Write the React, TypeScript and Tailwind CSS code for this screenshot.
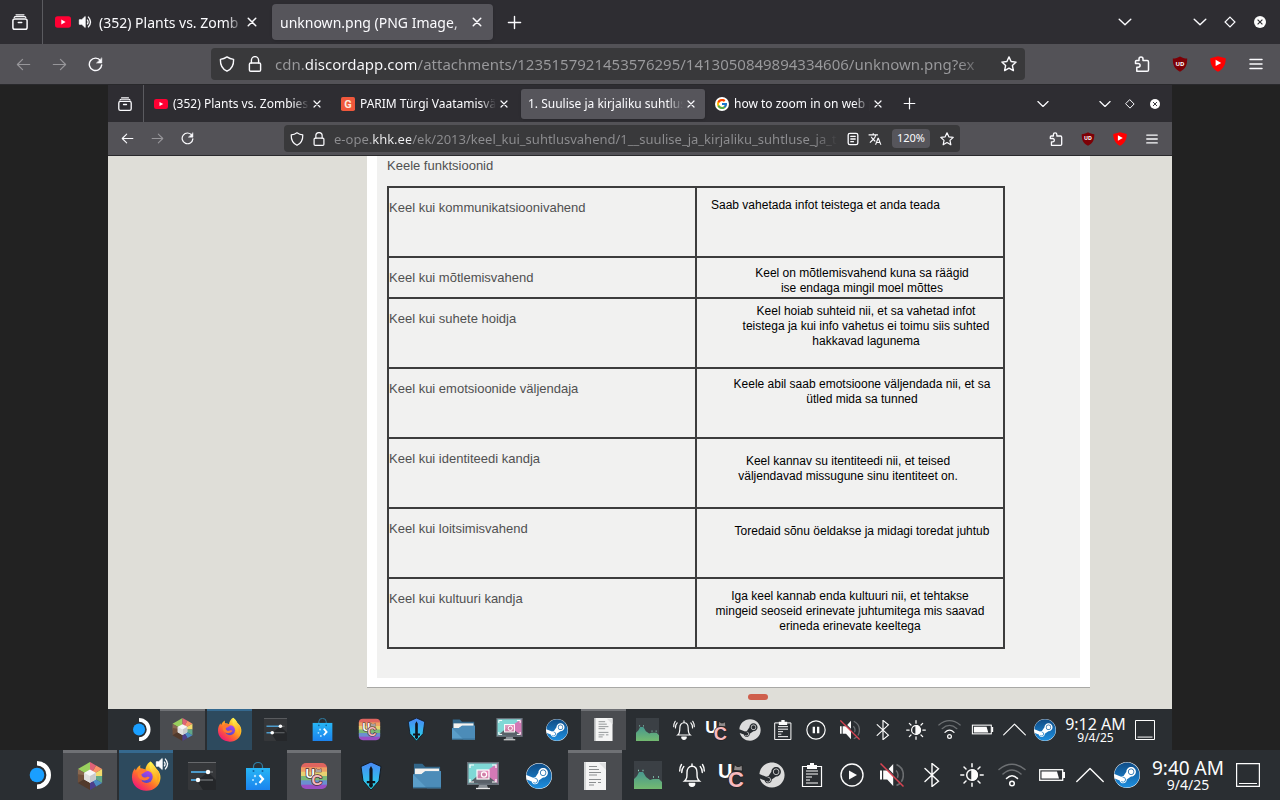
import React from "react";
import { FaSteam } from "react-icons/fa6";
import { FcGoogle } from "react-icons/fc";
import { MdTranslate } from "react-icons/md";

type IconProps = { className: string };

function Line({ className, box = 16, width = 1.3, children }: { className: string; box?: number; width?: number; children: React.ReactNode }) {
  return (
    <svg viewBox={`0 0 ${box} ${box}`} className={className} fill="none" stroke="currentColor" strokeWidth={width} strokeLinecap="round" strokeLinejoin="round" aria-hidden="true">
      {children}
    </svg>
  );
}

/* ---------- Browser icons ---------- */

const TabsIcon = ({ className }: IconProps) => (
  <Line className={className} width={1.5}>
    <path d="M4 .8h8M2.2 3.6q.3-1 1.4-1h8.8q1.1 0 1.4 1" strokeWidth={1.2} />
    <rect x=".9" y="5" width="14.2" height="10.2" rx="1.8" />
    <path d="M6.3 8.6h3.4" />
  </Line>
);
const CloseIcon = ({ className }: IconProps) => (
  <Line className={className} width={2.4}>
    <path d="M2 2l12 12M14 2L2 14" />
  </Line>
);
const PlusIcon = ({ className }: IconProps) => (
  <Line className={className} width={1.5}>
    <path d="M8 1.5v13M1.5 8h13" />
  </Line>
);
const ChevronDown = ({ className }: IconProps) => (
  <Line className={className} width={1.4}>
    <path d="M2.2 5.2L8 10.8l5.8-5.6" />
  </Line>
);
const DiamondIcon = ({ className }: IconProps) => (
  <Line className={className} width={1.6}>
    <path d="M8 1.4L14.6 8 8 14.6 1.4 8z" strokeLinejoin="miter" />
  </Line>
);
const WindowClose = ({ className }: IconProps) => (
  <svg viewBox="0 0 16 16" className={className} aria-hidden="true">
    <circle cx="8" cy="8" r="8" fill="#fcfcfc" />
    <path d="M4.8 4.8l6.4 6.4M11.2 4.8l-6.4 6.4" stroke="#2e2d32" strokeWidth="1.5" />
  </svg>
);
const BackIcon = ({ className }: IconProps) => (
  <Line className={className}>
    <path d="M14.6 8H1.6M7 2.6L1.5 8 7 13.4" />
  </Line>
);
const ForwardIcon = ({ className }: IconProps) => (
  <Line className={className}>
    <path d="M1.4 8h13M9 2.6L14.5 8 9 13.4" />
  </Line>
);
const ReloadIcon = ({ className }: IconProps) => (
  <Line className={className} width={1.5}>
    <path d="M13.4 4A6.6 6.6 0 1 0 14.6 8.4" />
    <path d="M14.7 1.2v5.2H9.4z" fill="currentColor" strokeWidth=".6" />
  </Line>
);
const ShieldIcon = ({ className }: IconProps) => (
  <Line className={className} width={1.4}>
    <path d="M8 .9c2 1.5 4.3 2.3 6.6 2.5C14.8 9 12.6 13 8 15.2 3.4 13 1.2 9 1.4 3.4 3.7 3.2 6 2.4 8 .9z" />
  </Line>
);
const LockIcon = ({ className }: IconProps) => (
  <Line className={className} width={1.4}>
    <rect x="2.4" y="7" width="11.2" height="8.2" rx="1.3" />
    <path d="M4.4 7V4.2a3.6 3.6 0 0 1 7.2 0V7" />
  </Line>
);
const StarIcon = ({ className }: IconProps) => (
  <Line className={className} width={1.4}>
    <path d="M8 .9l2.1 4.6 5 .6-3.7 3.5 1 5L8 12.1l-4.4 2.5 1-5L.9 6.1l5-.6z" />
  </Line>
);
const ReaderIcon = ({ className }: IconProps) => (
  <Line className={className} width={1.5}>
    <rect x="2.5" y="1.5" width="11" height="13" rx="2" />
    <path d="M5.5 5h5M5.5 8h5M5.5 11h3" />
  </Line>
);
const PuzzleIcon = ({ className }: IconProps) => (
  <Line className={className} width={1.5}>
    <path d="M2.8 15.2v-4h1.4a1.9 1.9 0 0 0 0-3.8H1.500V5.600q0-1 1-1H5V3a2 2 0 0 1 4 0v1.600h4.200q1.300 0 1.300 1.300v8q0 1.300-1.300 1.300z" />
  </Line>
);
const UblockIcon = ({ className }: IconProps) => (
  <svg viewBox="0 0 16 16" className={className} aria-hidden="true">
    <path d="M8 .4c2 1.300 4.500 2 7.200 2.100 0 6.500-1.500 10.300-7.200 13.200C2.300 12.800.8 9 .8 2.500 3.500 2.400 6 1.700 8 .4z" fill="#7d0006" />
    <text x="8" y="9.5" fontSize="6" fontWeight="700" textAnchor="middle" fill="#fff" fontFamily="Noto Sans, sans-serif">UD</text>
  </svg>
);
const SponsorIcon = ({ className }: IconProps) => (
  <svg viewBox="0 0 16 16" className={className} aria-hidden="true">
    <path d="M8 .3l7.700 2c.2 6-2.500 11-7.700 13.500C2.800 13.300.1 8.300.3 2.300z" fill="#ff0000" />
    <path d="M5.600 3.700l5.600 3.200-5.600 3.200z" fill="#fff" />
  </svg>
);
const MenuIcon = ({ className }: IconProps) => (
  <Line className={className} width={1.5}>
    <path d="M2 3.5h12M2 8h12M2 12.5h12" />
  </Line>
);
const YoutubeIcon = ({ className }: IconProps) => (
  <svg viewBox="0 0 16 16" className={className} aria-hidden="true">
    <rect x="0" y="2.3" width="16" height="11.4" rx="2.6" fill="#ff0033" />
    <path d="M6.300 5.600l4.300 2.400-4.300 2.400z" fill="#fff" />
  </svg>
);
const SoundIcon = ({ className }: IconProps) => (
  <svg viewBox="0 0 16 16" className={className} fill="none" stroke="#fbfbfe" aria-hidden="true">
    <path d="M1.500 5.400h2.800L8.200 1.800v12.400l-3.900-3.600H1.500z" fill="#fbfbfe" strokeLinejoin="round" />
    <path d="M10.500 5.200q2 2.800 0 5.600M11.500 1.800q5.600 6.200 0 12.400" strokeWidth="1.5" />
  </svg>
);
const GuideIcon = ({ className }: IconProps) => (
  <svg viewBox="0 0 16 16" className={className} aria-hidden="true">
    <rect width="16" height="16" rx="2" fill="#f0583c" />
    <text x="8" y="12.5" fontSize="12.5" fontWeight="700" textAnchor="middle" fill="#ffe9dd" fontFamily="Roboto, sans-serif">G</text>
  </svg>
);

/* ---------- Application icons ---------- */

const DeckIcon = ({ className }: IconProps) => (
  <svg viewBox="0 0 28 28" className={className} aria-hidden="true">
    <circle cx="11" cy="14" r="7.3" fill="#1a9fff" />
    <path d="M11 0a14 14 0 0 1 0 28v-4.600a9.400 9.400 0 0 0 0-18.800z" fill="#fff" />
  </svg>
);
const PrismIcon = ({ className }: IconProps) => (
  <svg viewBox="0 0 28 30" className={className} aria-hidden="true">
    <path d="M14 0L1 7.500 14 15z" fill="#99cf5e" />
    <path d="M1 7.500V15l13 0z" fill="#8a6a52" />
    <path d="M1 13v9.500L14 15z" fill="#6f4f3b" />
    <path d="M1 22.500L14 30V15z" fill="#523a2c" />
    <path d="M14 0l6.500 3.700L14 15z" fill="#df6277" />
    <path d="M20.500 3.700L27 7.500 14 15z" fill="#fb9168" />
    <path d="M27 7.500V15H14z" fill="#f3db6c" />
    <path d="M27 15v7.500L14 15z" fill="#62a888" />
    <path d="M27 22.500l-6.500 3.700L14 15z" fill="#4b8cc4" />
    <path d="M20.500 26.200L14 30V15z" fill="#4c3e8e" />
    <path d="M14 8l6.200 3.500v7.200L14 22.300l-6.200-3.600v-7.200z" fill="#f6f6f6" />
    <path d="M14 15l6.200-3.500v7.200L14 22.300z" fill="#c9c9cb" />
    <path d="M14 15v7.300l-6.200-3.600v-7.200z" fill="#dfdfdf" />
  </svg>
);
const FirefoxIcon = ({ className }: IconProps) => (
  <svg viewBox="1 0 30 32" className={`overflow-visible ${className}`} aria-hidden="true">
    <defs>
      <linearGradient id="fxBody" x1=".85" y1=".1" x2=".2" y2=".95">
        <stop offset="0" stopColor="#fff44f" />
        <stop offset=".35" stopColor="#ffb320" />
        <stop offset=".62" stopColor="#ff6a2e" />
        <stop offset="1" stopColor="#f0147a" />
      </linearGradient>
      <linearGradient id="fxGlobe" x1=".7" y1="0" x2=".3" y2="1">
        <stop offset="0" stopColor="#b044f0" />
        <stop offset="1" stopColor="#4a49c6" />
      </linearGradient>
      <linearGradient id="fxFlame" x1=".3" y1="0" x2=".6" y2="1">
        <stop offset="0" stopColor="#fff44f" />
        <stop offset="1" stopColor="#ff9a1f" />
      </linearGradient>
    </defs>
    <g transform="translate(-1 -1) scale(1.07)">
      <path d="M20.500.5c4 2.500 4.600 6.200 7.600 9 2.900 3 3.400 6 3.200 9C30.800 26 24.500 31.700 16.300 31.700 7.600 31.700.9 25.600.9 17.300c0-4.300 1.300-7.300 3.300-9.700.1 1 .3 1.700.8 2.400C6 7.200 7.800 5.300 10 4.300c-.5 1.400-.4 2.600.2 3.600 2 .1 3.600.5 5 1.300C15.600 5.600 17.200 2.600 20.500.5z" fill="url(#fxBody)" />
      <circle cx="16.5" cy="16.8" r="6.6" fill="url(#fxGlobe)" />
      <path d="M10 8c3 0 5.800 1 7.300 3.200-3.300 0-3.400 2.300-6.300 2.600 0 2.700 2.300 4.500 5.200 3.400 1.700-.6 2.700-.6 3.600.3-1.800 3.400-8 4.600-11.400.6C6 15.200 7 10.500 10 8z" fill="#ff7a2f" />
      <path d="M20.500.5c4 2.500 4.600 6.200 7.600 9 3 3.500 2.800 8.500 0 12.500-.1-7-3.400-7.600-6.600-11.300-1.700-2-2.200-5.300-1-10.200z" fill="url(#fxFlame)" />
    </g>
  </svg>
);
const SettingsIcon = ({ className }: IconProps) => (
  <svg viewBox="0 0 28 28" className={className} aria-hidden="true">
    <rect width="28" height="28" rx="1" fill="#35373a" />
    <path d="M20 10l8 8v10H15L9 19z" fill="#25272a" />
    <path d="M0 .5h28" stroke="#66686b" />
    <path d="M3 10h17M3 18h7" stroke="#4d9bcb" strokeWidth="1.8" />
    <path d="M20 10h5M10 18h15" stroke="#66696c" strokeWidth="1.3" />
    <circle cx="20" cy="10" r="2.2" fill="#fff" />
    <circle cx="10" cy="18" r="2.2" fill="#fff" />
  </svg>
);
const StoreIcon = ({ className }: IconProps) => (
  <svg viewBox="0 0 28 28" className={className} aria-hidden="true">
    <defs>
      <linearGradient id="store" x1="0" y1="0" x2="0" y2="1">
        <stop offset="0" stopColor="#27b6f5" />
        <stop offset="1" stopColor="#1b83ee" />
      </linearGradient>
    </defs>
    <path d="M9.500 9V4.500a4.500 4 0 0 1 9 0V9" fill="none" stroke="#2f7ea4" strokeWidth="1.2" />
    <rect x="2" y="6" width="24" height="22" fill="url(#store)" />
    <circle cx="9.5" cy="9" r="1" fill="#1264a0" />
    <circle cx="18.5" cy="9" r="1" fill="#1264a0" />
    <path d="M15.500 13l3.500 4-3.500 4" fill="none" stroke="#fff" strokeWidth="2.2" />
    <circle cx="11" cy="14" r="1.2" fill="#aee0ff" />
    <circle cx="9" cy="18" r="1.1" fill="#aee0ff" />
    <circle cx="12" cy="22" r="1.2" fill="#aee0ff" />
  </svg>
);
const VencordIcon = ({ className }: IconProps) => (
  <svg viewBox="0 0 28 28" className={className} aria-hidden="true">
    <defs>
      <clipPath id="vcClip"><rect x="1" y="1" width="26" height="26" rx="5" /></clipPath>
    </defs>
    <g clipPath="url(#vcClip)">
      <rect width="28" height="6" fill="#e0655f" />
      <rect y="5.3" width="28" height="5" fill="#ef9f63" />
      <rect y="9.7" width="28" height="5" fill="#e8d171" />
      <rect y="14" width="28" height="5" fill="#7cb976" />
      <rect y="18.3" width="28" height="5" fill="#6b8fd0" />
      <rect y="22.7" width="28" height="6" fill="#9a4fc4" />
    </g>
    <g fontFamily="Liberation Sans, sans-serif" fontWeight="700" stroke="#4a3038" strokeWidth="1.5" paintOrder="stroke">
      <text x="5.5" y="15.5" fontSize="13" fill="#fff">U</text>
      <path d="M15.500 10l.6-3.500 1.600 1.200h1.800l1.600-1.200.4 3.500z" fill="#a9a3a3" strokeWidth=".6" />
      <text x="11.5" y="22.5" fontSize="15" fill="#f7b9bd">C</text>
    </g>
  </svg>
);
const SwordIcon = ({ className }: IconProps) => (
  <svg viewBox="0 0 28 28" className={className} aria-hidden="true">
    <defs>
      <linearGradient id="sword" x1="0" y1="0" x2="0" y2="1">
        <stop offset="0" stopColor="#4a86f5" />
        <stop offset="1" stopColor="#25dbe8" />
      </linearGradient>
    </defs>
    <path d="M14 0l10 4.500-2 14.500L14 28 6 19 4 4.500z" fill="url(#sword)" stroke="#121a24" strokeWidth="1" />
    <path d="M14 4l1.600 3v12h2.600v2.200h-2.600L16 24l-2 2-2-2 .4-2.800H9.800V19h2.600V7z" fill="#11151c" />
  </svg>
);
const FolderIcon = ({ className }: IconProps) => (
  <svg viewBox="0 0 30 26" className={className} aria-hidden="true">
    <path d="M1 0h9l3 3h16v8H1z" fill="#326689" />
    <path d="M2 5h26v8H2z" fill="#f4f2ef" />
    <path d="M0 11h9l4-3h17v18H0z" fill="#5b9ec9" />
    <path d="M30 8v18H15L0 11h9l4-3z" fill="#4c8cb8" />
    <path d="M0 25.300h30" stroke="#376f96" />
  </svg>
);
const SpectacleIcon = ({ className }: IconProps) => (
  <svg viewBox="2 0 28 28" className={`overflow-visible ${className}`} aria-hidden="true">
    <rect width="32" height="23" fill="#69717a" />
    <path d="M1.500 1.500h29L11 21.500H1.500z" fill="#7fd8d6" />
    <path d="M30.500 1.500v20L16 11z" fill="#d379b6" />
    <path d="M1.500 21.500l14-12 15 12z" fill="#596068" />
    <path d="M3 6V3h4M25 3h4v3M3 17v3h4M25 20h4v-3" stroke="#fff" strokeWidth="1.2" fill="none" />
    <rect x="10" y="8" width="12" height="9" fill="#ef8ab8" fillOpacity=".8" stroke="#fff" strokeWidth="1.2" />
    <circle cx="17" cy="12.5" r="2.6" fill="none" stroke="#fff" strokeWidth="1.2" />
    <path d="M12 23h8l1 3H11z" fill="#8b9197" />
    <path d="M9 26.500h14" stroke="#e8e8e8" strokeWidth="1.3" />
  </svg>
);
const SteamBlue = ({ className }: IconProps) => (
  <span className="flex rounded-full bg-white">
    <FaSteam className={className} fill="url(#steamBlue)" />
  </span>
);
const SteamGray = ({ className }: IconProps) => <FaSteam className={className} color="#dcdcdc" />;
const DocIcon = ({ className }: IconProps) => (
  <svg viewBox="0 0 28 28" className={className} aria-hidden="true">
    <rect x="3" y="0" width="22" height="28" fill="#f4f4f4" />
    <path d="M4 0v28" stroke="#c9cbcc" strokeWidth="1.5" />
    <path d="M18 1h7v7z" fill="#dedfe0" />
    <path d="M8 4.500h8M8 7.500h10M8 10.500h12M8 13h8M8 17.500h12M8 20.500h7M17 20.500h3M8 23h5" stroke="#8b8e90" strokeWidth="1.1" />
  </svg>
);
const MonitorIcon = ({ className }: IconProps) => (
  <svg viewBox="0 0 28 28" className={className} aria-hidden="true">
    <defs>
      <linearGradient id="hills" x1="0" y1="0" x2="0" y2="1">
        <stop offset="0" stopColor="#48988e" />
        <stop offset="1" stopColor="#73ba70" />
      </linearGradient>
    </defs>
    <rect width="28" height="28" fill="#3b4045" />
    <path d="M0 18l3-3 2-4h4l3 5 4 3 3-1h6l3 3v7H0z" fill="url(#hills)" />
    <path d="M4 9.500h1M8.500 9.500h1M19 16h1M24 16h1" stroke="#8bd4bd" strokeWidth="1.6" />
  </svg>
);

/* ---------- Tray icons ---------- */

const BellIcon = ({ className }: IconProps) => (
  <Line className={className} box={24} width={1.4}>
    <path d="M4.500 18c2.500-2 2.500-4 2.500-8.500C7 5.500 9 3.300 12 3.300s5 2.200 5 6.200c0 4.500 0 6.500 2.500 8.500z" strokeLinejoin="miter" />
    <path d="M12 1v2M3.800 3.500C2.300 5 1.700 7 1.700 9.500M1.500 1.500C.2 3.500-.5 5.500-.3 8M20.200 3.500c1.500 1.500 2.100 3.500 2.100 6M22.500 1.500c1.300 2 2 4 1.800 6.500" />
    <path d="M9.300 20.500h5.400a2.700 2.700 0 0 1-5.400 0z" fill="currentColor" />
  </Line>
);
const VcTrayIcon = ({ className }: IconProps) => (
  <svg viewBox="0 0 24 24" className={className} aria-hidden="true">
    <g fontFamily="Liberation Sans, sans-serif" fontWeight="700">
      <text x="-2" y="15" fontSize="20" fill="#fff">U</text>
      <path d="M13.500 7.500l1-6 2.500 2h2.500l2.500-1.500.5 6z" fill="#8e8a8a" stroke="#1b1b1b" strokeWidth=".8" />
      <text x="8" y="24" fontSize="22" fill="#f7b9bd" stroke="#1f2023" strokeWidth="1.5" paintOrder="stroke">C</text>
    </g>
  </svg>
);
const ClipIcon = ({ className }: IconProps) => (
  <Line className={className} box={24} width={1.2}>
    <path d="M2.500 3.500h19v20h-19z" strokeLinejoin="miter" />
    <path d="M7 2h3V0h4v2h3v4H7z" fill="currentColor" stroke="none" />
    <path d="M6 8h12M6 11h12M6 14h6M6 17h4M6 20h12" strokeLinecap="butt" />
  </Line>
);
const PlayIcon = ({ className }: IconProps) => (
  <Line className={className} box={24} width={1.4}>
    <circle cx="12" cy="12" r="11" />
    <path d="M9 7.500l8 4.500-8 4.500z" fill="currentColor" stroke="none" />
  </Line>
);
const PauseIcon = ({ className }: IconProps) => (
  <Line className={className} box={24} width={1.4}>
    <circle cx="12" cy="12" r="11" />
    <path d="M8 8h2.800v8H8zM13.200 8H16v8h-2.800z" fill="currentColor" stroke="none" />
  </Line>
);
const MuteIcon = ({ className }: IconProps) => (
  <svg viewBox="0 0 24 24" className={className} aria-hidden="true">
    <path d="M0 7.500h2v9H0zM3.200 7.500h4l6-6.500v22l-6-6.500h-4z" fill="#fcfcfc" />
    <path d="M16 7.500a6 6 0 0 1 0 9M16.500 1.500a11.500 11.500 0 0 1 0 21" fill="none" stroke="#6a6d70" strokeWidth="1.6" />
    <path d="M2 .5l22 22" stroke="#2a2e32" strokeWidth="1.5" />
    <path d="M.5.5l23 23" stroke="#da4453" strokeWidth="1.5" />
  </svg>
);
const BluetoothIcon = ({ className }: IconProps) => (
  <Line className={className} box={24} width={1.4}>
    <path d="M5 5.500l13.500 12.700-6.500 5.300V.5l6.500 5.300L5 18.500" strokeLinejoin="miter" />
  </Line>
);
const BrightnessIcon = ({ className }: IconProps) => (
  <Line className={className} box={24} width={1.5}>
    <circle cx="12" cy="12" r="5.3" />
    <path d="M12 6.700a5.300 5.300 0 0 1 0 10.600z" fill="currentColor" />
    <path d="M12 .8v3M12 20.200v3M.8 12h3M20.200 12h3M4 4l2 2M18 18l2 2M4 20l2-2M18 6l2-2" />
  </Line>
);
const WifiIcon = ({ className }: IconProps) => (
  <Line className={className} box={28} width={1.5}>
    <path d="M1 8.500q13-10.500 26 0M5 13q9-8 18 0" stroke="#6d7073" />
    <path d="M8.500 17.500q5.500-5.500 11 0" />
    <circle cx="14" cy="22.5" r="2.3" />
  </Line>
);
const BatteryIcon = ({ className }: IconProps) => (
  <svg viewBox="0 0 28 28" className={className} aria-hidden="true">
    <rect x="1.7" y="8.7" width="23" height="10.6" fill="none" stroke="#fcfcfc" strokeWidth="1.3" />
    <path d="M3.500 10.500H19l2 7H3.500zM25 11h2v6h-2z" fill="#fcfcfc" />
  </svg>
);
const CaretUp = ({ className }: IconProps) => (
  <Line className={className} box={28} width={1.4}>
    <path d="M.8 20.500L14 7.500l13.200 13" />
  </Line>
);
const DesktopIcon = ({ className }: IconProps) => (
  <Line className={className} box={24} width={1.2}>
    <path d="M.6.6h22.800v22.800H.6zM3 20.500h18" strokeLinejoin="miter" strokeLinecap="butt" />
  </Line>
);

/* ---------- Browser chrome ---------- */

type Size = "lg" | "sm";

const chrome = {
  lg: {
    tabBar: "h-[44px]",
    overview: "w-10",
    divider: "ml-0.5",
    tabs: "gap-1 pl-1",
    tab: "w-[221px] h-9 px-2 text-[14px] rounded",
    icon: "size-4",
    arrow: "size-[15px]",
    close: "size-2.5 ml-1 mr-[3px]",
    glyph: "size-3",
    plus: "w-[42px]",
    winBtn: "w-[30px]",
    winBar: "pr-[5px]",
    listGap: "mr-[45px]",
    tool: "h-[41px] px-[5px]",
    nav: "w-9",
    ext: "w-[38px]",
    field: "h-8 mx-[98px] px-2 gap-3 text-[15px]",
    input: "[background-image:linear-gradient(to_right,#9a9a9d_29px,#fbfbfe_29px,#fbfbfe_141px,#9a9a9d_141px,#9a9a9d_calc(100%_-_30px),transparent)]",
  },
  sm: {
    tabBar: "h-[37px]",
    overview: "w-[33px]",
    divider: "ml-0.5",
    tabs: "gap-[3px] pl-[3px]",
    tab: "w-[184px] h-[30px] px-[7px] text-[12px] rounded-[3px]",
    icon: "size-3.5",
    arrow: "size-[13px]",
    close: "size-2 ml-1 mr-[3px]",
    glyph: "size-2.5",
    plus: "w-[34px]",
    winBtn: "w-[25px]",
    winBar: "pr-[5px]",
    listGap: "mr-[37px]",
    tool: "h-[34px] px-1",
    nav: "w-[30px]",
    ext: "w-8",
    field: "h-[27px] ml-[82px] mr-20 px-1.5 gap-2 text-[13px]",
    input: "[background-image:linear-gradient(to_right,#8e8e91_37px,#f0f0f2_37px,#f0f0f2_77px,#8e8e91_77px,#8e8e91_calc(100%_-_24px),transparent)]",
  },
};

const btn = "flex h-full shrink-0 items-center justify-center";

function IconButton({ label, className, children }: { label: string; className: string; children: React.ReactNode }) {
  return (
    <button type="button" aria-label={label} className={`${btn} ${className}`}>
      {children}
    </button>
  );
}

type TabData = { title: string; icons: React.ReactNode; active?: boolean };

function TabBar({ size, tabs }: { size: Size; tabs: TabData[] }) {
  const c = chrome[size];
  return (
    <div className={`flex items-center bg-[#2e2d32] text-[#fbfbfe] ${c.tabBar}`}>
      <IconButton label="Tabs" className={c.overview}>
        <TabsIcon className={c.icon} />
      </IconButton>
      <span className={`h-full w-px bg-[#5b5b60] ${c.divider}`} />
      <div className={`flex items-center ${c.tabs}`}>
        {tabs.map((t) => (
          <div key={t.title} className={`flex items-center ${c.tab} ${t.active ? "bg-[#56555b] shadow" : ""}`}>
            <button type="button" className="flex min-w-0 flex-1 items-center">
              {t.icons}
              <span className="min-w-0 flex-1 overflow-hidden whitespace-nowrap text-left [mask-image:linear-gradient(to_right,black_calc(100%_-_16px),transparent)]">
                {t.title}
              </span>
            </button>
            <button type="button" aria-label="Close tab" className="shrink-0">
              <CloseIcon className={c.close} />
            </button>
          </div>
        ))}
      </div>
      <IconButton label="New tab" className={c.plus}>
        <PlusIcon className={c.arrow} />
      </IconButton>
      <div className={`ml-auto flex h-full ${c.winBar}`}>
        <IconButton label="List all tabs" className={`${c.winBtn} ${c.listGap}`}>
          <ChevronDown className={c.icon} />
        </IconButton>
        <IconButton label="Minimize" className={c.winBtn}>
          <ChevronDown className={c.icon} />
        </IconButton>
        <IconButton label="Maximize" className={c.winBtn}>
          <DiamondIcon className={c.glyph} />
        </IconButton>
        <IconButton label="Close" className={c.winBtn}>
          <WindowClose className={c.glyph} />
        </IconButton>
      </div>
    </div>
  );
}

function Toolbar({ size, url, canGoBack, extras }: { size: Size; url: string; canGoBack?: boolean; extras?: React.ReactNode }) {
  const c = chrome[size];
  return (
    <div className={`flex items-center border-b border-[#29292c] bg-[#535257] text-[#fbfbfe] ${c.tool}`}>
      <IconButton label="Back" className={`${c.nav} ${canGoBack ? "" : "text-[#97969a]"}`}>
        <BackIcon className={c.arrow} />
      </IconButton>
      <IconButton label="Forward" className={`${c.nav} text-[#97969a]`}>
        <ForwardIcon className={c.arrow} />
      </IconButton>
      <IconButton label="Reload" className={c.nav}>
        <ReloadIcon className={c.arrow} />
      </IconButton>
      <div className={`flex min-w-0 flex-1 items-center rounded bg-[#39393b] ${c.field}`}>
        <ShieldIcon className={`shrink-0 ${c.icon}`} />
        <LockIcon className={`shrink-0 ${c.icon}`} />
        <input
          aria-label="Address"
          defaultValue={url}
          className={`h-full min-w-0 flex-1 bg-clip-text text-transparent outline-none ${c.input}`}
        />
        {extras}
        <button type="button" aria-label="Bookmark this page" className="shrink-0">
          <StarIcon className={c.icon} />
        </button>
      </div>
      <IconButton label="Extensions" className={c.ext}>
        <PuzzleIcon className={c.icon} />
      </IconButton>
      <IconButton label="uBlock Origin" className={c.ext}>
        <UblockIcon className={c.icon} />
      </IconButton>
      <IconButton label="SponsorBlock" className={c.ext}>
        <SponsorIcon className={c.icon} />
      </IconButton>
      <IconButton label="Menu" className={c.ext}>
        <MenuIcon className={c.icon} />
      </IconButton>
    </div>
  );
}

/* ---------- Taskbar ---------- */

type TaskState = "idle" | "open" | "focused";

const taskState: Record<TaskState, string> = {
  idle: "border-transparent",
  open: "border-[#6f7175] bg-[#4a4c50]",
  focused: "border-[#35698f] bg-[#2d4a5e]",
};

const bar = {
  lg: {
    root: "h-[50px]",
    start: "w-[46px] ml-[17px]",
    tasks: "w-[559px]",
    top: "border-t-[3px]",
    app: "size-7",
    steam: "size-[26px]",
    tray: "size-6",
    wide: "size-7",
    trayGrid: "w-[400px]",
    monitor: "w-12",
    caret: "w-9",
    steamSlot: "w-[38px]",
    clock: "w-[84px]",
    time: "text-[19px] leading-[20px]",
    date: "text-[14px] leading-[14px]",
    desktop: "w-9 mr-3.5",
  },
  sm: {
    root: "h-[41px]",
    start: "w-[38px] ml-[14px]",
    tasks: "w-[466px]",
    top: "border-t-2",
    app: "size-[23px]",
    steam: "size-[22px]",
    tray: "size-5",
    wide: "size-[23px]",
    trayGrid: "w-[332px]",
    monitor: "w-10",
    caret: "w-[30px]",
    steamSlot: "w-8",
    clock: "w-[69px]",
    time: "text-[16px] leading-[16px]",
    date: "text-[12px] leading-[12px]",
    desktop: "w-[30px] mr-3",
  },
};

function Taskbar({ size, time, date, playing, open }: { size: Size; time: string; date: string; playing?: boolean; open: string[] }) {
  const b = bar[size];
  const tasks: { name: string; icon: React.ReactNode }[] = [
    { name: "Prism Launcher", icon: <PrismIcon className={b.app} /> },
    { name: "Firefox", icon: <FirefoxIcon className={b.app} /> },
    { name: "System Settings", icon: <SettingsIcon className={b.app} /> },
    { name: "Discover", icon: <StoreIcon className={b.app} /> },
    { name: "Vencord", icon: <VencordIcon className={b.app} /> },
    { name: "Heroic", icon: <SwordIcon className={b.app} /> },
    { name: "Dolphin", icon: <FolderIcon className={b.app} /> },
    { name: "Spectacle", icon: <SpectacleIcon className={b.app} /> },
    { name: "Steam", icon: <SteamBlue className={b.steam} /> },
    { name: "Document", icon: <DocIcon className={b.app} /> },
  ];
  const tray: [string, React.ReactNode][] = [
    ["Notifications", <BellIcon className={`overflow-visible ${b.tray}`} />],
    ["Vencord tray", <VcTrayIcon className={`overflow-visible ${b.tray}`} />],
    ["Steam tray", <SteamGray className={b.steam} />],
    ["Clipboard", <ClipIcon className={b.tray} />],
    ["Media player", playing ? <PauseIcon className={b.tray} /> : <PlayIcon className={b.tray} />],
    ["Volume", <MuteIcon className={b.tray} />],
    ["Bluetooth", <BluetoothIcon className={b.tray} />],
    ["Brightness", <BrightnessIcon className={b.tray} />],
    ["Network", <WifiIcon className={b.wide} />],
    ["Battery", <BatteryIcon className={b.wide} />],
  ];
  return (
    <div className={`flex items-stretch bg-[#2a2e32] text-[#fcfcfc] ${b.root}`}>
      <IconButton label="Application launcher" className={b.start}>
        <DeckIcon className={b.app} />
      </IconButton>
      <div className={`grid shrink-0 grid-cols-10 gap-0.5 ${b.tasks}`}>
        {tasks.map((t) => {
          const state: TaskState = t.name === "Firefox" ? "focused" : open.includes(t.name) ? "open" : "idle";
          return (
            <button key={t.name} type="button" aria-label={t.name} className={`relative flex items-center justify-center pb-0.5 ${b.top} ${taskState[state]}`}>
              {t.icon}
              {t.name === "Firefox" && size === "lg" && (
                <span className="absolute right-1 top-1">
                  <SoundIcon className="size-3.5" />
                </span>
              )}
            </button>
          );
        })}
      </div>
      <div className="ml-auto flex shrink-0">
        <IconButton label="System monitor" className={b.monitor}>
          <MonitorIcon className={b.app} />
        </IconButton>
        <div className={`grid grid-cols-10 ${b.trayGrid}`}>
          {tray.map(([name, icon]) => (
            <IconButton key={name} label={name} className="w-full">
              {icon}
            </IconButton>
          ))}
        </div>
        <IconButton label="Show hidden icons" className={b.caret}>
          <CaretUp className={b.wide} />
        </IconButton>
        <IconButton label="Steam status" className={b.steamSlot}>
          <SteamBlue className={b.steam} />
        </IconButton>
        <button type="button" className={`flex flex-col items-center justify-center whitespace-nowrap ${b.clock}`}>
          <span className={b.time}>{time}</span>
          <span className={b.date}>{date}</span>
        </button>
        <IconButton label="Show desktop" className={b.desktop}>
          <DesktopIcon className={b.tray} />
        </IconButton>
      </div>
    </div>
  );
}

/* ---------- Worksheet ---------- */

const rows = [
  { term: "Keel kui kommunikatsioonivahend", lines: ["Saab vahetada infot teistega et anda teada"], row: "h-[70px]", cell: "pt-2.5 pl-3.5 text-left" },
  { term: "Keel kui mõtlemisvahend", lines: ["Keel on mõtlemisvahend kuna sa räägid", "ise endaga mingil moel mõttes"], row: "h-[41px]", cell: "pt-2 pl-6 text-center" },
  { term: "Keel kui suhete hoidja", lines: ["Keel hoiab suhteid nii, et sa vahetad infot", "teistega ja kui info vahetus ei toimu siis suhted", "hakkavad lagunema"], row: "h-[70px]", cell: "pt-[5px] pl-8 text-center" },
  { term: "Keel kui emotsioonide väljendaja", lines: ["Keele abil saab emotsioone väljendada nii, et sa", "ütled mida sa tunned"], row: "h-[70px]", cell: "pt-2 pl-6 text-center" },
  { term: "Keel kui identiteedi kandja", lines: ["Keel kannav su itentiteedi nii, et teised", "väljendavad missugune sinu itentiteet on."], row: "h-[70px]", cell: "pt-[15px] pr-1 text-center" },
  { term: "Keel kui loitsimisvahend", lines: ["Toredaid sõnu öeldakse ja midagi toredat juhtub"], row: "h-[70px]", cell: "pt-[15px] pl-6 text-center" },
  { term: "Keel kui kultuuri kandja", lines: ["Iga keel kannab enda kultuuri nii, et tehtakse", "mingeid seoseid erinevate juhtumitega mis saavad", "erineda erinevate keeltega"], row: "h-[70px]", cell: "pt-2.5 text-center" },
];

function Worksheet() {
  return (
    <div className="flex flex-1 flex-col bg-[#dfded8] pl-[259px] pr-[82px] font-['Liberation_Sans',Arial,sans-serif]">
      <div className="border-b border-[#a9a9a6] bg-white px-2.5 pb-[9px]">
        <div className="bg-[#f1f1f0] px-2.5 pb-[29px] pt-0.5">
          <h1 className="pb-3 text-[13px] leading-4 text-[#505050]">Keele funktsioonid</h1>
          <table className="w-[618px] table-fixed border-collapse">
            <tbody>
              {rows.map((r) => (
                <tr key={r.term} className={r.row}>
                  <th scope="row" className="border-2 border-[#3d3d3d] pt-3 text-left align-top text-[13px] font-normal leading-4 text-[#505050]">
                    {r.term}
                  </th>
                  <td className={`border-2 border-[#3d3d3d] align-top text-[12px] leading-[15px] text-black ${r.cell}`}>
                    {r.lines.map((l) => (
                      <span key={l} className="block whitespace-nowrap">{l}</span>
                    ))}
                  </td>
                </tr>
              ))}
            </tbody>
          </table>
        </div>
      </div>
      <div className="flex flex-1 items-center pb-1 pl-[381px]">
        <span className="h-1.5 w-5 rounded-full bg-[#cf5f4c]" />
      </div>
    </div>
  );
}

export default function App() {
  return (
    <div className="flex min-h-screen flex-col bg-[#222222] font-['Noto_Sans',sans-serif]">
      <svg className="absolute size-0" aria-hidden="true">
        <defs>
          <linearGradient id="steamBlue" x1="0" y1="0" x2="0" y2="1">
            <stop offset="0" stopColor="#0f4c86" />
            <stop offset="1" stopColor="#1d8fe0" />
          </linearGradient>
        </defs>
      </svg>
      <TabBar
        size="lg"
        tabs={[
          {
            title: "(352) Plants vs. Zomb",
            icons: (
              <>
                <YoutubeIcon className="size-4 shrink-0" />
                <SoundIcon className="mx-[7px] size-3.5 shrink-0" />
              </>
            ),
          },
          { title: "unknown.png (PNG Image,", icons: null, active: true },
        ]}
      />
      <Toolbar size="lg" url="cdn.discordapp.com/attachments/1235157921453576295/1413050849894334606/unknown.png?ex" />
      <main className="flex flex-1 px-[108px]">
        <div className="flex min-w-0 flex-1 flex-col">
          <TabBar
            size="sm"
            tabs={[
              { title: "(352) Plants vs. Zombies", icons: <YoutubeIcon className="mr-[5px] size-3.5 shrink-0" /> },
              { title: "PARIM Türgi Vaatamisvä", icons: <GuideIcon className="mr-[5px] size-3.5 shrink-0" /> },
              { title: "1. Suulise ja kirjaliku suhtlus", icons: null, active: true },
              { title: "how to zoom in on web p", icons: <FcGoogle className="mr-[5px] size-3.5 shrink-0 rounded-full bg-white p-px" /> },
            ]}
          />
          <Toolbar
            size="sm"
            canGoBack
            url="e-ope.khk.ee/ek/2013/keel_kui_suhtlusvahend/1__suulise_ja_kirjaliku_suhtluse_ja_te"
            extras={
              <>
                <button type="button" aria-label="Reader view" className="shrink-0">
                  <ReaderIcon className="size-3.5" />
                </button>
                <button type="button" aria-label="Translate page" className="shrink-0">
                  <MdTranslate className="size-3.5" />
                </button>
                <button type="button" className="mx-0.5 h-[19px] w-[38px] shrink-0 rounded-sm bg-[#56555b] text-[11px]">120%</button>
              </>
            }
          />
          <Worksheet />
          <Taskbar size="sm" time="9:12 AM" date="9/4/25" playing open={["Prism Launcher", "Document"]} />
        </div>
      </main>
      <Taskbar size="lg" time="9:40 AM" date="9/4/25" open={["Prism Launcher", "Vencord", "Document"]} />
    </div>
  );
}
